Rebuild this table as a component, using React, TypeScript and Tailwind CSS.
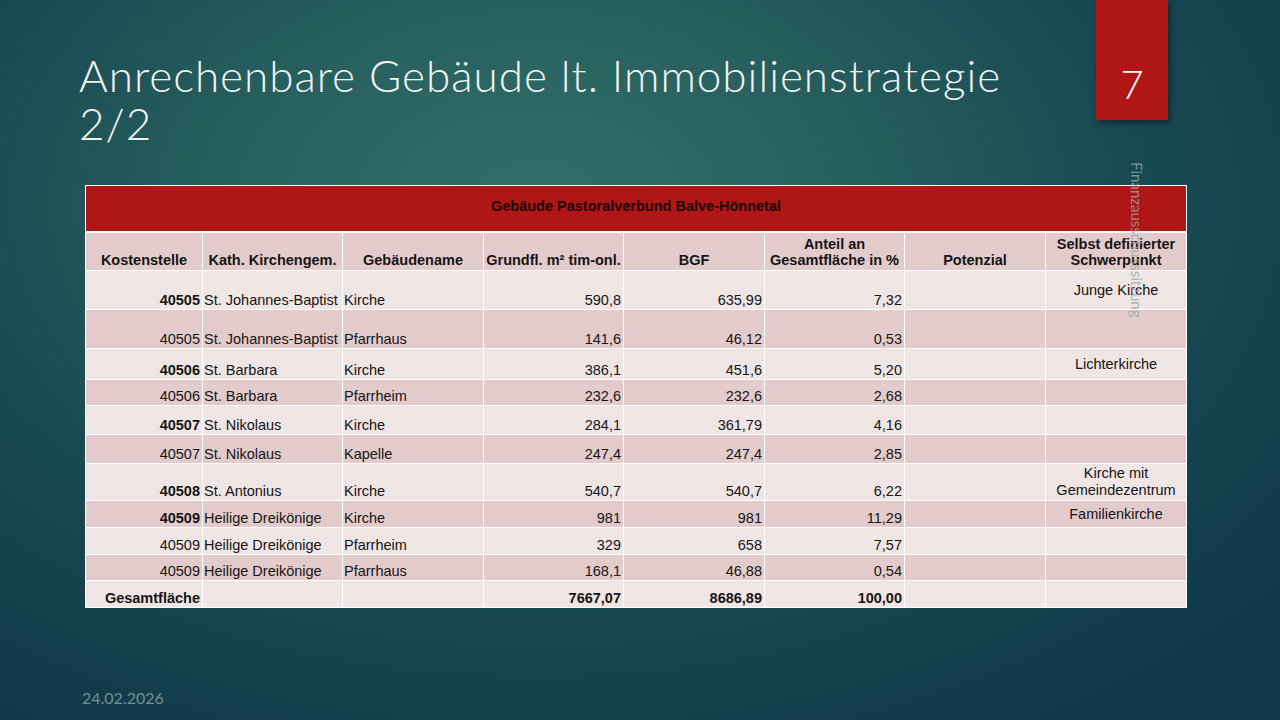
type Row = {
  ks: string;
  bold: boolean;
  gem: string;
  geb: string;
  gf: string;
  bgf: string;
  anteil: string;
  schwer?: string;
  h: string;
  bg: string;
};

const light = "bg-[#efe5e5]";
const dark = "bg-[#e3cbcc]";

const rows: Row[] = [
  { ks: "40505", bold: true, gem: "St. Johannes-Baptist", geb: "Kirche", gf: "590,8", bgf: "635,99", anteil: "7,32", schwer: "Junge Kirche", h: "h-[38px]", bg: light },
  { ks: "40505", bold: false, gem: "St. Johannes-Baptist", geb: "Pfarrhaus", gf: "141,6", bgf: "46,12", anteil: "0,53", h: "h-[38px]", bg: dark },
  { ks: "40506", bold: true, gem: "St. Barbara", geb: "Kirche", gf: "386,1", bgf: "451,6", anteil: "5,20", schwer: "Lichterkirche", h: "h-[30px]", bg: light },
  { ks: "40506", bold: false, gem: "St. Barbara", geb: "Pfarrheim", gf: "232,6", bgf: "232,6", anteil: "2,68", h: "h-[25px]", bg: dark },
  { ks: "40507", bold: true, gem: "St. Nikolaus", geb: "Kirche", gf: "284,1", bgf: "361,79", anteil: "4,16", h: "h-[28px]", bg: light },
  { ks: "40507", bold: false, gem: "St. Nikolaus", geb: "Kapelle", gf: "247,4", bgf: "247,4", anteil: "2,85", h: "h-[28px]", bg: dark },
  { ks: "40508", bold: true, gem: "St. Antonius", geb: "Kirche", gf: "540,7", bgf: "540,7", anteil: "6,22", schwer: "Kirche mit Gemeindezentrum", h: "h-[36px]", bg: light },
  { ks: "40509", bold: true, gem: "Heilige Dreikönige", geb: "Kirche", gf: "981", bgf: "981", anteil: "11,29", schwer: "Familienkirche", h: "h-[26px]", bg: dark },
  { ks: "40509", bold: false, gem: "Heilige Dreikönige", geb: "Pfarrheim", gf: "329", bgf: "658", anteil: "7,57", h: "h-[26px]", bg: light },
  { ks: "40509", bold: false, gem: "Heilige Dreikönige", geb: "Pfarrhaus", gf: "168,1", bgf: "46,88", anteil: "0,54", h: "h-[25px]", bg: dark },
];

const cols = "grid grid-cols-[116px_139px_140px_139px_140px_139px_140px_140px] gap-px";
const num = "flex items-end justify-end pr-[2px] whitespace-nowrap";
const txt = "flex items-end pl-[1px] whitespace-nowrap";

const App = () => {
  return (
    <div
      className="relative w-[1280px] h-[720px] overflow-hidden flex flex-col bg-[radial-gradient(ellipse_75%_85%_at_42%_28%,#33706a_0%,#28615f_30%,#194a53_62%,#10384a_100%)]"
      style={{ fontFamily: "'Liberation Sans', Arial, sans-serif" }}
    >
      {/* Titel */}
      <h1 className="pl-[79px] pt-[51px] text-[44px] leading-[48px] tracking-[1px] font-light text-[#f2f2f2] font-['Lato',sans-serif]">
        Anrechenbare Gebäude lt. Immobilienstrategie
        <br />
        2/2
      </h1>

      {/* Seitenzahl */}
      <div className="absolute left-[1096px] top-0 w-[72px] h-[120px] bg-[#b01615] shadow-[2px_3px_6px_rgba(0,0,0,0.45)] flex justify-center pt-[64px]">
        <span className="text-[40px] leading-[40px] font-light text-white font-['Lato',sans-serif]">7</span>
      </div>

      {/* Tabelle */}
      <div className="mt-[38px] ml-[85px] w-[1102px] bg-white p-px flex flex-col gap-px text-[14.5px] leading-[17px] text-[#151515]">
        <div className="h-[45px] mb-px pb-[5px] bg-[#b11616] flex items-center justify-center font-bold text-[14.5px] text-[#1a0505]">
          Gebäude Pastoralverbund Balve-Hönnetal
        </div>
        <div className={`${cols} h-[37px] font-bold`}>
          {[
            ["Kostenstelle"],
            ["Kath. Kirchengem."],
            ["Gebäudename"],
            ["Grundfl. m² tim-onl."],
            ["BGF"],
            ["Anteil an", "Gesamtfläche in %"],
            ["Potenzial"],
            ["Selbst definierter", "Schwerpunkt"],
          ].map((lines, i) => (
            <div key={i} className={`${dark} flex flex-col items-center justify-end pb-[2px] leading-[16px] whitespace-nowrap`}>
              {lines.map((l) => (
                <span key={l}>{l}</span>
              ))}
            </div>
          ))}
        </div>
        {rows.map((r, i) => (
          <div key={i} className={`${cols} ${r.h}`}>
            <div className={`${r.bg} ${num} ${r.bold ? "font-bold" : ""}`}>{r.ks}</div>
            <div className={`${r.bg} ${txt}`}>{r.gem}</div>
            <div className={`${r.bg} ${txt}`}>{r.geb}</div>
            <div className={`${r.bg} ${num}`}>{r.gf}</div>
            <div className={`${r.bg} ${num}`}>{r.bgf}</div>
            <div className={`${r.bg} ${num}`}>{r.anteil}</div>
            <div className={r.bg} />
            <div className={`${r.bg} flex items-center justify-center text-center px-1`}>
              {r.schwer}
            </div>
          </div>
        ))}
        <div className={`${cols} h-[26px] font-bold`}>
          <div className={`${light} ${num} overflow-visible`}>Gesamtfläche</div>
          <div className={light} />
          <div className={light} />
          <div className={`${light} ${num}`}>7667,07</div>
          <div className={`${light} ${num}`}>8686,89</div>
          <div className={`${light} ${num}`}>100,00</div>
          <div className={light} />
          <div className={light} />
        </div>
      </div>

      {/* Fußzeile vertikal */}
      <div className="absolute left-[1129px] top-[162px] [writing-mode:vertical-rl] text-[15px] leading-[16px] text-[#9aa7a8]/80 font-['Lato',sans-serif]">
        Finanzausschusssitzung
      </div>

      {/* Datum */}
      <div className="mt-auto pl-[82px] pb-[13px] text-[16px] leading-[19px] text-[#6f9094] font-['Lato',sans-serif]">
        24.02.2026
      </div>
    </div>
  );
};

export default App;
